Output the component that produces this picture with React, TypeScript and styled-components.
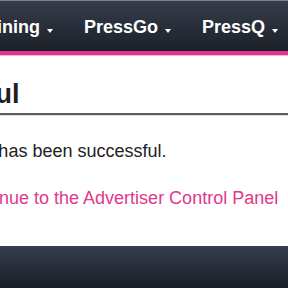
import styled, { createGlobalStyle } from "styled-components";

const GlobalStyle = createGlobalStyle`
  html, body {
    margin: 0;
    padding: 0;
    background: #fff;
    overflow: hidden;
  }
  body {
    font-family: "Liberation Sans", Arial, Helvetica, sans-serif;
    color: #222;
  }
`;

const NavBar = styled.nav`
  height: 50px;
  border-top: 1px solid #7c828b;
  border-bottom: 4px solid #e2338b;
  box-shadow: 0 1px 0 #f6b4d3;
  background: linear-gradient(#363e4b, #1c2028);
  overflow: hidden;
`;

const NavList = styled.ul`
  display: flex;
  gap: 31px;
  margin: 0 0 0 -30px;
  padding: 15px 0 0;
  list-style: none;
`;

const NavItem = styled.li`
  display: flex;
  align-items: baseline;
  gap: 7px;
  color: #fff;
  font-size: 18px;
  font-weight: bold;
  line-height: 22px;
  white-space: nowrap;
`;

const Caret = styled.svg`
  width: 6px;
  height: 4px;
  fill: #fff;
`;

const Main = styled.main`
  margin-left: -43px;
`;

const Title = styled.h1`
  margin: 23px 0 0;
  padding: 0 0 3px;
  font-size: 27px;
  line-height: 32px;
  font-weight: bold;
  color: #1e1e1e;
  text-indent: -80px;
  white-space: nowrap;
  border-bottom: 2px solid #5b5b5b;
  box-shadow: 0 1px 0 #dcdcdc;
`;

const Message = styled.p`
  margin: 24px 0 0;
  font-size: 18px;
  line-height: 24px;
  white-space: nowrap;
`;

const PanelLink = styled.a`
  display: block;
  margin-top: 23px;
  font-size: 18px;
  line-height: 24px;
  color: #e0388c;
  text-decoration: none;
  white-space: nowrap;
`;

const Footer = styled.footer`
  margin-top: 36px;
  height: 42px;
  background: linear-gradient(#343e4e, #1a1e25);
`;

const menu = ["Training", "PressGo", "PressQ"];

export default function App() {
  return (
    <>
      <GlobalStyle />
      <NavBar>
        <NavList>
          {menu.map((label) => (
            <NavItem key={label}>
              {label}
              <Caret viewBox="0 0 6 4">
                <polygon points="0,0 6,0 3,4" />
              </Caret>
            </NavItem>
          ))}
        </NavList>
      </NavBar>
      <Main>
        <Title>Successful</Title>
        <Message>Your has been successful.</Message>
        <PanelLink href="#">Continue to the Advertiser Control Panel</PanelLink>
      </Main>
      <Footer />
    </>
  );
}
